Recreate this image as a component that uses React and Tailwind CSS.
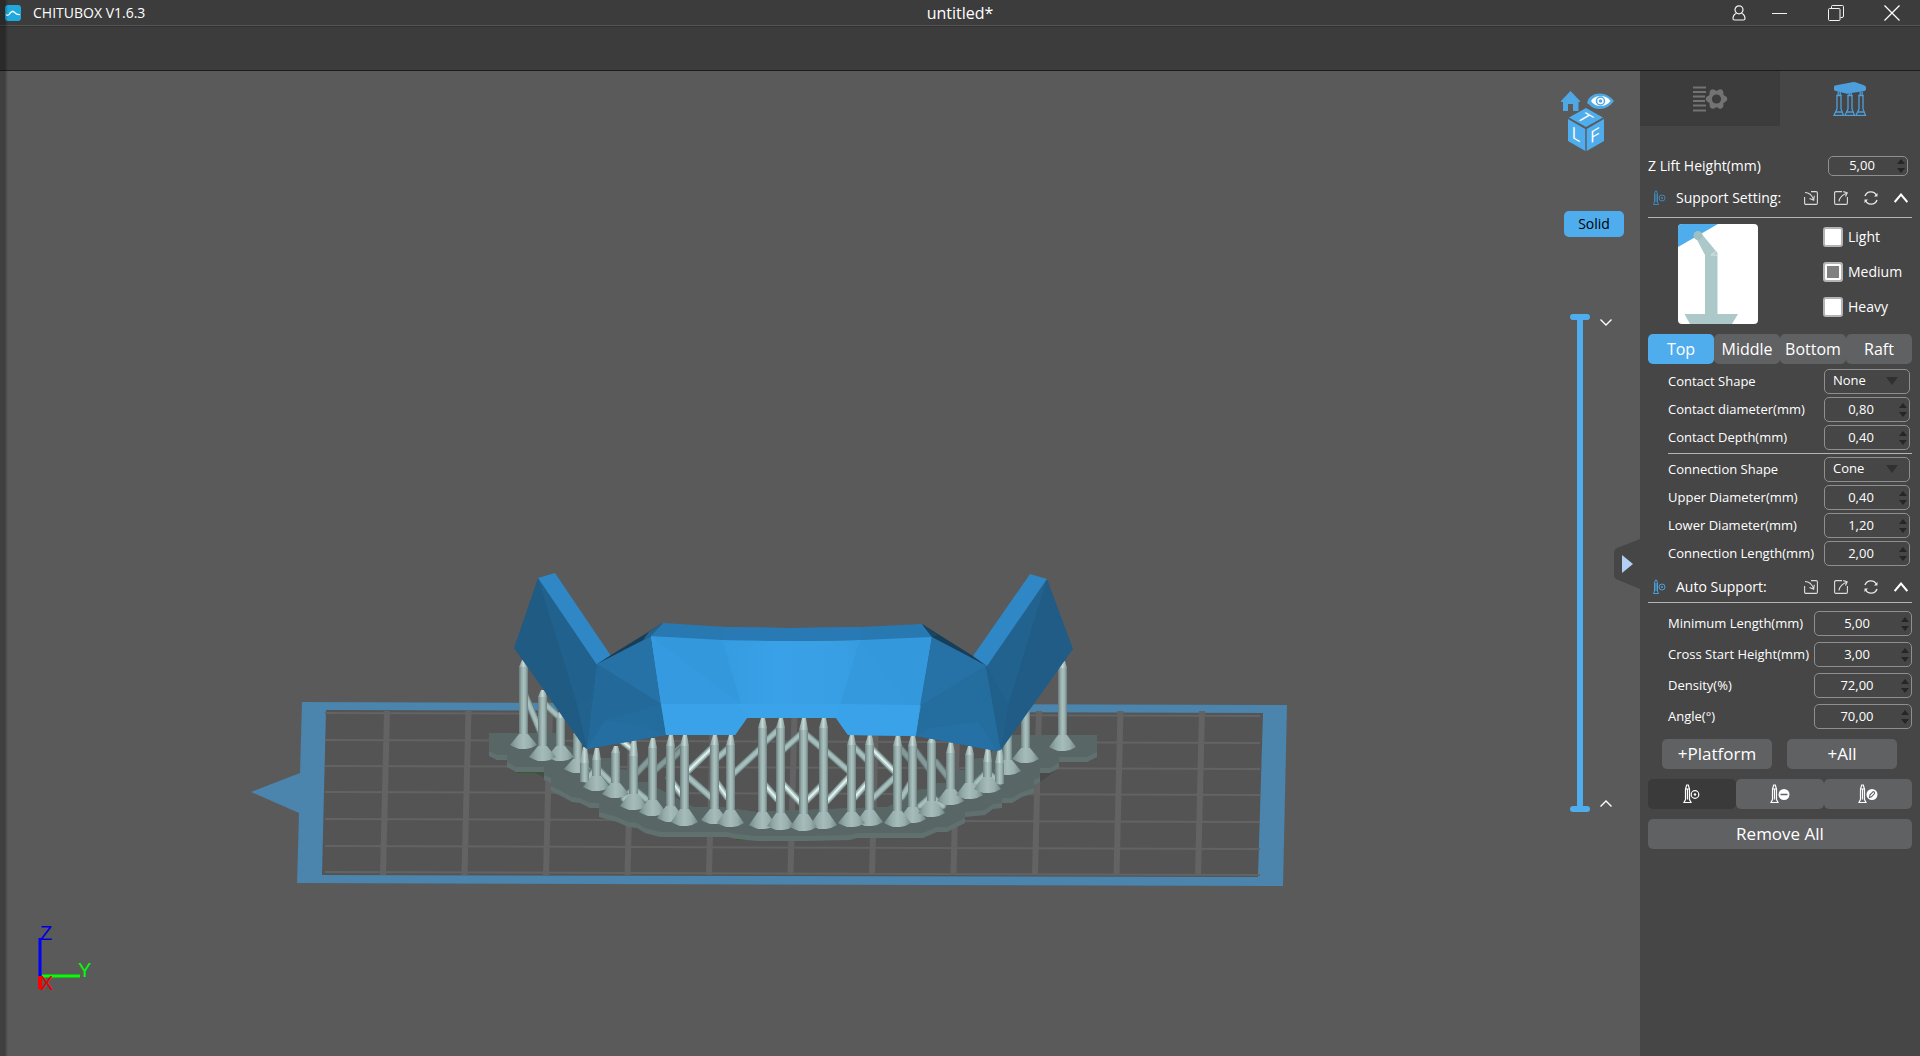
import React, { useState } from "react";

/* ---------- scene data ---------- */

const RAFT =
  "489,733 565,733 565,745 600,758 612,758 612,769 628,770 628,782 647,782 657,788 693,807 720,807 757,812 830,809 888,807 917,790 934,788 934,783 955,783 955,770 973,770 973,759 985,758 1010,735 1097,735 1097,757 1087,762 1059,762 1059,768 1050,773 1040,773 1040,782 1034,785 1034,793 1022,797 1012,803 1002,803 1002,808 993,809 985,815 965,817 965,823 947,832 937,832 923,838 857,838 850,840 807,841 757,841 737,839 727,837 660,837 645,833 637,828 628,827 617,822 599,817 599,808 590,808 580,803 572,802 563,797 551,791 551,783 544,780 544,772 516,772 507,767 507,760 497,760 489,756";

// x, tip, shoulder, cone top, cone bottom (equal values mean a pillar with no foot)
const PILLARS = [
  [577, 728, 735, 762, 773],
  [584, 747, 763, 781, 781],
  [560, 712, 718, 749, 761],
  [542, 690, 697, 749, 761],
  [523, 660, 667, 737, 749],
  [596, 748, 760, 779, 791],
  [615, 746, 753, 786, 798],
  [633, 738, 756, 797, 810],
  [652, 738, 748, 803, 816],
  [670, 735, 746, 809, 822],
  [714, 735, 745, 812, 824],
  [730, 735, 745, 813, 827],
  [762, 718, 728, 815, 829],
  [823, 718, 728, 815, 829],
  [780, 718, 728, 816, 830],
  [803, 718, 730, 817, 831],
  [869, 735, 745, 813, 826],
  [851, 735, 745, 815, 827],
  [912, 735, 746, 810, 823],
  [897, 735, 746, 814, 827],
  [931, 737, 743, 804, 817],
  [950, 742, 753, 792, 805],
  [969, 746, 755, 786, 799],
  [1007, 728, 735, 763, 775],
  [999, 748, 763, 783, 783],
  [987, 747, 762, 780, 793],
  [1025, 705, 710, 751, 763],
  [1062, 661, 668, 738, 751],
  [684, 735, 746, 812, 826],
];

// x1, y1, x2, y2, tone
const BRACES = [
  [523, 690, 541, 733, "mid"],
  [543, 702, 560, 718, "mid"],
  [622, 741, 632, 749, "light"],
  [633, 777, 650, 759, "dark"],
  [652, 773, 682, 746, "dark"],
  [670, 761, 682, 749, "dark"],
  [687, 772, 713, 747, "light"],
  [688, 777, 713, 799, "mid"],
  [669, 778, 682, 795, "light"],
  [715, 760, 730, 747, "mid"],
  [715, 780, 727, 797, "light"],
  [732, 775, 762, 747, "mid"],
  [763, 744, 780, 728, "mid"],
  [765, 785, 777, 799, "light"],
  [782, 751, 803, 732, "mid"],
  [782, 783, 802, 804, "light"],
  [803, 732, 823, 749, "mid"],
  [825, 750, 851, 773, "mid"],
  [804, 803, 823, 784, "light"],
  [827, 801, 851, 775, "light"],
  [852, 745, 869, 762, "mid"],
  [854, 798, 868, 782, "light"],
  [871, 748, 897, 774, "light"],
  [872, 799, 897, 775, "mid"],
  [900, 748, 913, 763, "dark"],
  [902, 797, 913, 779, "mid"],
  [915, 750, 932, 773, "dark"],
  [936, 762, 950, 780, "dark"],
  [586, 780, 596, 769, "mid"],
  [598, 769, 610, 781, "mid"],
  [624, 799, 633, 789, "mid"],
  [634, 789, 646, 799, "mid"],
  [920, 806, 931, 796, "mid"],
  [931, 796, 943, 806, "mid"],
  [976, 783, 986, 773, "mid"],
  [988, 773, 1000, 782, "mid"],
];

const TONES = {
  dark: ["#5e7170", "#7f9593", "#869c9a"],
  mid: ["#6b8180", "#9ab2b0", "#a9c1bf"],
  light: ["#748a88", "#a9c0be", "#dff0ee"],
};

function Brace({ b }) {
  const [x1, y1, x2, y2, tone] = b;
  const [edge, body, shine] = TONES[tone];
  const p = { x1, y1, x2, y2, strokeLinecap: "round" };
  return (
    <g>
      <line {...p} stroke={edge} strokeWidth="7" />
      <line {...p} stroke={body} strokeWidth="5" />
      <line {...p} stroke={shine} strokeWidth="2" />
    </g>
  );
}

function Pillar({ p }) {
  const [x, tip, sh, ct, cb] = p;
  return (
    <g>
      <rect x={x - 4} y={sh} width="9" height={ct - sh + 1} fill="url(#shaft)" />
      <polygon points={`${x - 1},${tip} ${x + 3},${tip} ${x + 5},${sh} ${x - 4},${sh}`} fill="url(#tip)" />
      {cb > ct && (
        <path
          d={`M${x - 4},${ct - 3} L${x + 5},${ct - 3} L${x + 14},${cb - 4} L${x + 8},${cb - 1} L${x + 3},${cb} L${x - 4},${cb} L${x - 9},${cb - 2} L${x - 13},${cb - 4} Z`}
          fill="url(#foot)"
        />
      )}
    </g>
  );
}

function Scene() {
  const cols = Array.from({ length: 11 }, (_, i) => i);
  const rows = [713, 740, 766, 792, 819, 846, 872];
  return (
    <svg
      className="absolute inset-0 h-full w-full"
      viewBox="0 71 1640 985"
      preserveAspectRatio="xMinYMin meet"
      aria-label="Build plate with supported model"
    >
      <defs>
        <linearGradient id="shaft">
          <stop offset="0" stopColor="#677b79" />
          <stop offset="0.25" stopColor="#91a8a6" />
          <stop offset="0.5" stopColor="#a9c0be" />
          <stop offset="0.75" stopColor="#9ab1af" />
          <stop offset="1" stopColor="#6b807e" />
        </linearGradient>
        <linearGradient id="tip">
          <stop offset="0" stopColor="#7d9390" />
          <stop offset="0.5" stopColor="#c4d8d6" />
          <stop offset="1" stopColor="#7d9390" />
        </linearGradient>
        <linearGradient id="foot">
          <stop offset="0" stopColor="#748987" />
          <stop offset="0.25" stopColor="#93aaa8" />
          <stop offset="0.5" stopColor="#a5bcba" />
          <stop offset="0.75" stopColor="#98afad" />
          <stop offset="1" stopColor="#748987" />
        </linearGradient>
        <linearGradient id="front">
          <stop offset="0" stopColor="#3498dc" />
          <stop offset="0.25" stopColor="#369ce2" />
          <stop offset="0.45" stopColor="#39a1e7" />
          <stop offset="0.6" stopColor="#39a0e6" />
          <stop offset="1" stopColor="#3498dc" />
        </linearGradient>
        <clipPath id="raftClip">
          <polygon points={RAFT} />
        </clipPath>
      </defs>

      {/* build plate */}
      <polygon points="302,702 1287,705 1283,886 297,883 299,813 251,792 300,773" fill="#4b84ad" />
      <polygon points="326,710 1263,713 1258,877 322,875" fill="#545454" />
      <g stroke="#636363">
        {cols.map((i) => (
          <line key={i} x1={387 + i * 81.5} y1="711" x2={383 + i * 81.5} y2="875" strokeWidth="6" />
        ))}
        {rows.map((y) => (
          <line key={y} x1="325" y1={y} x2="1260" y2={y + 3} strokeWidth="2" />
        ))}
      </g>

      {/* raft */}
      <path d="M517 772H545" stroke="#2b5f2d" strokeWidth="2" />
      <path d="M736 839H752" stroke="#2b5f2d" strokeWidth="2" />
      <path d="M535,773 L560,773 L560,785 Z M1040,782 L1054,772 L1040,772 Z" fill="#4a4a4a" />
      <polygon points={RAFT} fill="#5f706f" />
      <g clipPath="url(#raftClip)">
        <polygon points={RAFT} transform="translate(0 -5)" fill="#586766" />
      </g>

      {/* supports */}
      {BRACES.map((b, i) => (
        <Brace key={i} b={b} />
      ))}
      {PILLARS.map((p, i) => (
        <Pillar key={i} p={p} />
      ))}

      {/* model */}
      <g>
        <polygon points="538,578 514,648 584,747 587,749 597,664" fill="#205b84" />
        <polygon points="538,578 597,664 587,749 577,704" fill="#21618d" />
        <polygon points="597,664 590,700 577,704 587,749" fill="#22628f" />
        <polygon points="538,578 555,573 611,656 597,665" fill="#2f87c5" />
        <polygon points="597,664 651,636 666,735 587,749" fill="#236c9e" />
        <polygon points="597,664 651,636 661,704" fill="#2671a6" />
        <polygon points="587,749 605,720 661,704 597,664" fill="#236a9a" />
        <polygon points="587,749 605,720 645,727 666,735" fill="#246ea1" />
        <polygon points="597,664 611,655 663,623 651,636" fill="#173e59" />
        <polygon points="643,640 649,632 663,623 651,636" fill="#24648f" />

        <polygon
          points="651,636 722,639 790,641 860,640 932,636 916,736 848,735 836,718 747,718 735,735 666,735"
          fill="url(#front)"
        />
        <polygon points="651,636 722,639 741,704 661,704" fill="#3498dd" />
        <polygon points="651,636 661,704 741,704" fill="#359adf" />
        <polygon points="932,636 860,640 841,704 920,705" fill="#3498dc" />
        <polygon points="860,640 841,704 908,705" fill="#359add" />
        <polygon points="661,704 735,704 747,718 735,735 666,735" fill="#3aa2e9" />
        <polygon points="920,705 841,704 836,718 848,735 916,736" fill="#3aa2e8" />
        <polygon points="735,704 841,704 836,718 747,718" fill="#3ba3ea" />
        <polygon points="663,623 727,627 790,628 860,627 922,624 932,637 860,640 790,641 722,640 651,636" fill="#2879b2" />
        <polygon points="727,627 790,628 860,627 860,640 790,641 722,640" fill="#297ab4" />

        <polygon points="932,637 987,665 1001,750 997,751 916,736" fill="#246d9f" />
        <polygon points="932,637 987,665 920,706" fill="#2671a6" />
        <polygon points="916,736 930,728 978,721 997,751" fill="#2570a4" />
        <polygon points="922,624 932,637 987,666 973,656" fill="#173e59" />
        <polygon points="922,624 932,637 938,635" fill="#184763" />
        <polygon points="1047,579 1073,649 1001,750 986,666" fill="#205c86" />
        <polygon points="1047,579 986,666 1008,706" fill="#22628e" />
        <polygon points="986,666 1008,706 1001,750" fill="#21608b" />
        <polygon points="1030,574 1047,579 987,666 973,656" fill="#2f87c5" />
      </g>

      {/* axes */}
      <g strokeWidth="3">
        <path d="M40 976V938" stroke="#0000ff" />
        <path d="M42 976H80" stroke="#00ff00" />
        <path d="M40 976V989" stroke="#ff0000" strokeWidth="4" />
      </g>
      <g style={{ fontFamily: '"Liberation Sans", sans-serif', fontSize: 20 }}>
        <text x="40" y="940" fill="#0000dd">Z</text>
        <text x="78" y="977" fill="#00ff00">Y</text>
        <text x="40" y="990" fill="#e80000">X</text>
      </g>
    </svg>
  );
}

/* ---------- icons ---------- */

const AppLogo = () => (
  <svg width="16" height="16" viewBox="0 0 16 16" aria-hidden="true">
    <rect width="16" height="16" rx="3" fill="#1eaadc" />
    <path d="M1 9.500Q3 11.500 5 8.500T9.500 7 M4.500 8.500Q7 5 9.500 7.500T15 9.500" fill="none" stroke="#fff" strokeWidth="1.200" />
  </svg>
);

const UserIcon = () => (
  <svg width="14" height="16" viewBox="0 0 14 16" fill="none" stroke="#f2f2f2" strokeWidth="1.200" aria-hidden="true">
    <circle cx="7" cy="4.800" r="4" />
    <path d="M4.500 8.300C2 9.500 1 11.500 1 13.500c0 1 .5 1.500 1.500 1.500h9c1 0 1.500-.5 1.500-1.500 0-2-1-4-3.500-5.200" />
  </svg>
);

const MinIcon = () => (
  <svg width="16" height="16" viewBox="0 0 16 16" stroke="#f2f2f2" aria-hidden="true">
    <path d="M0 8.500H15" />
  </svg>
);

const RestoreIcon = () => (
  <svg width="16" height="16" viewBox="0 0 16 16" fill="none" stroke="#f2f2f2" aria-hidden="true">
    <rect x="0.500" y="3.500" width="11.500" height="12" rx="1" />
    <path d="M3.500 3.500V1.500Q3.500 .5 4.500 .5H14.500Q15.500 .5 15.500 1.500V11Q15.500 12.500 14 12.500H12.500" />
  </svg>
);

const CloseIcon = () => (
  <svg width="16" height="16" viewBox="0 0 16 16" stroke="#ffffff" strokeWidth="1.300" aria-hidden="true">
    <path d="M.5 .5 15.500 15.500M15.500 .5 .5 15.500" />
  </svg>
);

const GearListIcon = () => (
  <svg width="36" height="26" viewBox="0 0 36 26" aria-hidden="true">
    <path d="M1 1.500H14M1 6H14M1 10.500H13M1 15H13M1 19.500H14M1 24.500H14" stroke="#737373" strokeWidth="1.800" />
    <g fill="#737373" transform="translate(24.500 13)">
      <circle r="8" />
      {[0, 60, 120, 180, 240, 300].map((a) => (
        <path key={a} d="M6 -4.500 9 -2.800Q10.800 -1.500 10.800 0 10.800 1.500 9 2.800L6 4.500Z" transform={`rotate(${a})`} />
      ))}
    </g>
    <circle cx="24.500" cy="13" r="4.600" fill="#3c3c3c" />
  </svg>
);

const SupportTabIcon = () => (
  <svg width="34" height="36" viewBox="0 0 34 36" aria-hidden="true">
    <path d="M1 6Q1 5 2 4.600L19 1.200Q21 .8 22.500 1.300L31 4.200Q33 5 33 6.500V8Q33 9.500 31.500 10L15 12.600Q14 12.700 13 12.400L2 9.800Q1 9.500 1 8.500Z" fill="#4d9fdb" />
    <g fill="none" stroke="#4d9fdb" strokeWidth="1.300">
      {[1, 12, 23].map((x) => (
        <g key={x}>
          <path d={`M${x + 3} 14V28L${x} 34.300H${x + 9.500}L${x + 7} 28V14`} />
          <path d={`M${x + 2.500} 14.500H${x + 7.500}M${x + 4.200} 14V10.500M${x + 6.200} 14V10.500M${x + 2} 31H${x + 8}`} />
        </g>
      ))}
    </g>
  </svg>
);

const PinIcon = ({ color }) => (
  <svg width="13" height="16" viewBox="0 0 13 16" fill="none" stroke={color} aria-hidden="true">
    <path d="M1.500 4V12L.5 14.500H5.500L4.500 12V4L3.500 1H2.500ZM3 4V12" />
    <circle cx="9" cy="8" r="3" />
    <circle cx="9" cy="8" r="1" fill={color} stroke="none" />
  </svg>
);

function ToolPin({ kind }) {
  return (
    <svg width="20" height="20" viewBox="0 0 20 20" fill="none" stroke="#fff" aria-hidden="true">
      {kind === "target" ? (
        <>
          <path d="M3.500 5V15.500L2 18.500H9L7.500 15.500V5L6.300 1H4.700ZM3.500 5H7.500" strokeWidth="1.200" />
          <path d="M5.500 5V15.500" strokeWidth="1.200" />
          <circle cx="13" cy="10.500" r="3.800" strokeWidth="1.200" />
          <circle cx="13" cy="10.500" r="1.200" fill="#fff" stroke="none" />
        </>
      ) : (
        <>
          <path d="M2.500 5V15.500L1 18.500H8L6.500 15.500V5L5.300 1H3.700ZM2.500 5H6.500" strokeWidth="1.200" />
          <path d="M4.500 5V15.500" strokeWidth="1.200" />
          <circle cx="14" cy="10.500" r="5.500" fill="#fff" stroke="none" />
        </>
      )}
      {kind === "minus" && <path d="M10.500 10.500H17.500" stroke="#606163" strokeWidth="1.500" />}
      {kind === "edit" && (
        <path d="M11.500 13.500 12 10.800 15.200 7.500Q17 8 16.500 9.500L13.500 12.800Z" stroke="#606163" strokeWidth="1.100" />
      )}
    </svg>
  );
}

const ImportIcon = () => (
  <svg width="14" height="14" viewBox="0 0 14 14" fill="none" stroke="#dcdcdc" strokeWidth="1.100" aria-hidden="true">
    <path d="M7 .6H12Q13.400 .6 13.400 2V12Q13.400 13.400 12 13.400H2Q.6 13.400 .6 12V6" />
    <path d="M1 1.500Q7 1.500 9.500 8.500M5.500 7.500 9.700 9.200 10.300 4.800" />
  </svg>
);

const ExportIcon = () => (
  <svg width="14" height="14" viewBox="0 0 14 14" fill="none" stroke="#dcdcdc" strokeWidth="1.100" aria-hidden="true">
    <path d="M8 .6H2Q.6 .6 .6 2V12Q.6 13.400 2 13.400H12Q13.400 13.400 13.400 12V6" />
    <path d="M5 10.500Q5.500 5 13 2M9.300 .6 13.200 1.800 11.500 5.500" />
  </svg>
);

const ResetIcon = () => (
  <svg width="14" height="14" viewBox="0 0 14 14" fill="none" stroke="#e8e8e8" strokeWidth="1.400" aria-hidden="true">
    <path d="M1 5A6.200 6.200 0 0 1 12.500 4.500M13 9A6.200 6.200 0 0 1 1.500 9.500" />
    <path d="M13.500 2V5.500H10ZM.5 12V8.500H4Z" fill="#e8e8e8" stroke="none" />
  </svg>
);

const CollapseIcon = () => (
  <svg width="14" height="10" viewBox="0 0 14 10" fill="none" stroke="#fff" strokeWidth="2" aria-hidden="true">
    <path d="M.7 9 7 1.500 13.300 9" />
  </svg>
);

const ContactPicture = () => (
  <svg className="rounded-[4px]" width="80" height="100" viewBox="0 0 80 100" role="img" aria-label="Support shape">
    <rect width="80" height="100" fill="#fff" />
    <polygon points="0,0 40,0 0,23" fill="#4fadee" />
    <polygon points="17,12 23,9 39.500,29 39.500,90 27,90 27,31" fill="#adc8c9" />
    <polygon points="6.500,90 60,90 54,100 12,100" fill="#adc8c9" />
    <circle cx="20" cy="11.500" r="4.500" fill="#9fbfc1" />
    <path d="M33 31 39 27M33 31H39" stroke="#d6e4e4" strokeWidth="1" />
  </svg>
);

/* ---------- controls ---------- */

function NumberBox({ id, value, box }) {
  const [v, setV] = useState(value);
  const step = (d) => {
    const n = parseFloat(v.replace(",", ".")) + d;
    setV(n.toFixed(2).replace(".", ","));
  };
  return (
    <div className={`flex items-center rounded-[5px] border border-[#8f8f8f] ${box}`}>
      <input
        id={id}
        value={v}
        onChange={(e) => setV(e.target.value)}
        className="w-0 min-w-0 flex-1 bg-transparent text-center text-[13px] text-white outline-none"
      />
      <span className="flex w-3 flex-col items-center gap-1">
        <button aria-label="Increase" onClick={() => step(1)}>
          <svg className="block" width="8" height="5" viewBox="0 0 8 5"><path d="M4 0 8 5H0Z" fill="#262626" /></svg>
        </button>
        <button aria-label="Decrease" onClick={() => step(-1)}>
          <svg className="block" width="8" height="5" viewBox="0 0 8 5"><path d="M4 5 8 0H0Z" fill="#262626" /></svg>
        </button>
      </span>
    </div>
  );
}

function SelectBox({ id, options }) {
  return (
    <div className="relative h-[25px] w-[86px]">
      <select
        id={id}
        className="block h-full w-full appearance-none rounded-[5px] border border-[#8f8f8f] bg-transparent pb-px pl-2 text-[13px] text-white outline-none"
      >
        {options.map((o) => (
          <option key={o} className="bg-[#464646]">{o}</option>
        ))}
      </select>
      <svg className="pointer-events-none absolute right-3 top-2" width="12" height="8" viewBox="0 0 12 8">
        <path d="M0 0H12L6 8Z" fill="#303030" />
      </svg>
    </div>
  );
}

function Field({ id, label, children }) {
  return (
    <div className="flex h-[25px] items-center justify-between">
      <label htmlFor={id} className="text-[13px]">{label}</label>
      {children}
    </div>
  );
}

function SectionHead({ title, icon }) {
  return (
    <div className="flex h-5 items-center pl-[5px] pr-1">
      {icon}
      <h2 className="ml-2.5 flex-1 text-sm">{title}</h2>
      <div className="flex items-center gap-4">
        <button aria-label="Import"><ImportIcon /></button>
        <button aria-label="Export"><ExportIcon /></button>
        <button aria-label="Reset"><ResetIcon /></button>
        <button aria-label="Collapse"><CollapseIcon /></button>
      </div>
    </div>
  );
}

function SidePanel() {
  const [level, setLevel] = useState("Medium");
  const [part, setPart] = useState("Top");
  return (
    <aside className="flex w-[280px] shrink-0 flex-col bg-[#464646] text-white">
      <div className="grid h-[55px] grid-cols-2" role="tablist">
        <button role="tab" aria-label="Slice settings" className="flex items-center justify-center bg-[#3c3c3c]">
          <GearListIcon />
        </button>
        <button role="tab" aria-label="Support settings" aria-selected="true" className="flex items-center justify-center">
          <SupportTabIcon />
        </button>
      </div>

      <div className="flex flex-col px-2 pt-[30px]">
        <div className="flex items-center justify-between pr-1">
          <label htmlFor="lift" className="text-sm leading-5">Z Lift Height(mm)</label>
          <NumberBox id="lift" value="5,00" box="h-5 w-20" />
        </div>

        <div className="mt-3 border-b border-[#b4b4b4] pb-[9px]">
          <SectionHead title="Support Setting:" icon={<PinIcon color="#4286b8" />} />
        </div>

        <div className="mt-1.5 flex justify-between pl-[30px]">
          <ContactPicture />
          <div className="flex w-[89px] flex-col gap-[15px] pt-[3px]" role="radiogroup" aria-label="Support strength">
            {["Light", "Medium", "Heavy"].map((l) => (
              <label key={l} className="flex items-center gap-[5px] text-sm leading-5">
                <input
                  type="radio"
                  name="level"
                  checked={level === l}
                  onChange={() => setLevel(l)}
                  className="size-5 appearance-none rounded-[3px] border-2 border-[#b4b4b4] bg-white checked:bg-[#808080] checked:shadow-[inset_0_0_0_2px_#fff]"
                />
                {l}
              </label>
            ))}
          </div>
        </div>

        <div className="mt-2.5 grid grid-cols-4" role="tablist">
          {["Top", "Middle", "Bottom", "Raft"].map((t) => (
            <button
              key={t}
              role="tab"
              aria-selected={part === t}
              onClick={() => setPart(t)}
              className="h-[30px] rounded-[5px] bg-[#606163] text-base aria-selected:bg-[#4fadee]"
            >
              {t}
            </button>
          ))}
        </div>

        <div className="ml-5 mt-[5px] flex flex-col gap-[3px] border-b border-[#b4b4b4] pb-[3px] pr-0.5">
          <Field id="cshape" label="Contact Shape">
            <SelectBox id="cshape" options={["None", "Sphere"]} />
          </Field>
          <Field id="cdia" label="Contact diameter(mm)">
            <NumberBox id="cdia" value="0,80" box="h-[25px] w-[86px]" />
          </Field>
          <Field id="cdepth" label="Contact Depth(mm)">
            <NumberBox id="cdepth" value="0,40" box="h-[25px] w-[86px]" />
          </Field>
        </div>

        <div className="ml-5 mt-[3px] flex flex-col gap-[3px] pr-0.5">
          <Field id="nshape" label="Connection Shape">
            <SelectBox id="nshape" options={["Cone", "Cylinder"]} />
          </Field>
          <Field id="udia" label="Upper Diameter(mm)">
            <NumberBox id="udia" value="0,40" box="h-[25px] w-[86px]" />
          </Field>
          <Field id="ldia" label="Lower Diameter(mm)">
            <NumberBox id="ldia" value="1,20" box="h-[25px] w-[86px]" />
          </Field>
          <Field id="nlen" label="Connection Length(mm)">
            <NumberBox id="nlen" value="2,00" box="h-[25px] w-[86px]" />
          </Field>
        </div>

        <div className="mt-[11px] border-b border-[#b4b4b4] pb-[5px]">
          <SectionHead title="Auto Support:" icon={<PinIcon color="#4d9fdb" />} />
        </div>

        <div className="ml-5 mt-2 flex flex-col gap-1.5">
          <Field id="minlen" label="Minimum Length(mm)">
            <NumberBox id="minlen" value="5,00" box="h-[25px] w-[98px]" />
          </Field>
          <Field id="cross" label="Cross Start Height(mm)">
            <NumberBox id="cross" value="3,00" box="h-[25px] w-[98px]" />
          </Field>
          <Field id="density" label="Density(%)">
            <NumberBox id="density" value="72,00" box="h-[25px] w-[98px]" />
          </Field>
          <Field id="angle" label="Angle(°)">
            <NumberBox id="angle" value="70,00" box="h-[25px] w-[98px]" />
          </Field>
        </div>

        <div className="mt-2.5 grid grid-cols-2 gap-[15px] pl-3.5 pr-[15px]">
          <button className="h-[30px] rounded-[5px] bg-[#606163] text-[17px]">+Platform</button>
          <button className="h-[30px] rounded-[5px] bg-[#606163] text-[17px]">+All</button>
        </div>

        <div className="mt-2.5 grid grid-cols-3">
          <button aria-label="Add support" className="flex h-[30px] items-center justify-center rounded-[5px] bg-[#3a3a3a]">
            <ToolPin kind="target" />
          </button>
          <button aria-label="Delete support" className="flex h-[30px] items-center justify-center rounded-[5px] bg-[#606163]">
            <ToolPin kind="minus" />
          </button>
          <button aria-label="Edit support" className="flex h-[30px] items-center justify-center rounded-[5px] bg-[#606163]">
            <ToolPin kind="edit" />
          </button>
        </div>

        <button className="mt-2.5 h-[30px] rounded-[5px] bg-[#606163] text-[17px]">Remove All</button>
      </div>
    </aside>
  );
}

function ViewCube() {
  return (
    <svg className="ml-px" width="54" height="62" viewBox="1561 90 54 62" role="img" aria-label="View cube">
      <path d="M1561 101 1570.500 91 1580 101V102H1578.500V111H1573V104H1568V111H1563V102H1561Z" fill="#4fa8e4" />
      <path d="M1587 103Q1589 93.500 1600 93.500 1608 93.500 1614 101 1608 109 1600 109 1593 109 1589 104.500Z" fill="#4fa8e4" />
      <path d="M1591 101Q1594 96 1600.500 96 1607 96 1610.500 101 1607 106 1600.500 106 1594 106 1591 101Z" fill="#fff" />
      <circle cx="1600.500" cy="101" r="4" fill="none" stroke="#4fa8e4" strokeWidth="1.500" />
      <circle cx="1600.500" cy="101" r="1.800" fill="#4fa8e4" />
      <g fill="#4fadee">
        <polygon points="1586,108 1603,117.500 1586,127 1569,117.500" />
        <polygon points="1568,119 1585.300,129 1585.300,151 1568,141" />
        <polygon points="1604,119 1586.700,129 1586.700,151 1604,141" />
      </g>
      <g fill="#fff" textAnchor="middle" style={{ fontFamily: '"Liberation Sans", sans-serif', fontSize: 17 }}>
        <text transform="matrix(.87 .5 -.87 .5 1585 117.500)" y="6">T</text>
        <text transform="matrix(.87 .5 0 1 1576 140)">L</text>
        <text transform="matrix(.87 -.5 0 1 1595 141)">F</text>
      </g>
    </svg>
  );
}

const LAYER_INPUT =
  "col-start-1 row-start-1 m-0 h-full w-5 appearance-none bg-transparent [direction:rtl] [writing-mode:vertical-lr] pointer-events-none [&::-webkit-slider-thumb]:pointer-events-auto [&::-webkit-slider-thumb]:h-1.5 [&::-webkit-slider-thumb]:w-5 [&::-webkit-slider-thumb]:appearance-none [&::-webkit-slider-thumb]:rounded-full [&::-webkit-slider-thumb]:bg-[#4fadee]";

function Viewport() {
  const [top, setTop] = useState(100);
  const [bottom, setBottom] = useState(0);
  return (
    <main className="relative flex flex-1 justify-end overflow-hidden bg-[#5a5a5a]">
      <Scene />
      <div className="relative flex w-20 flex-col pt-[19px]">
        <ViewCube />
        <button className="ml-1 mt-[59px] h-[26px] w-[60px] rounded-[5px] bg-[#4fadee] text-sm text-black">Solid</button>
        <div className="ml-2.5 mt-[77px] flex h-[498px] gap-2.5">
          <div className="grid w-5 justify-items-center">
            <span className="col-start-1 row-start-1 h-full w-1.5 bg-[#4fadee]" />
            <input type="range" aria-label="Top layer" value={top} onChange={(e) => setTop(+e.target.value)} className={LAYER_INPUT} />
            <input type="range" aria-label="Bottom layer" value={bottom} onChange={(e) => setBottom(+e.target.value)} className={LAYER_INPUT} />
          </div>
          <div className="flex flex-col justify-between py-[5px]">
            <button aria-label="Layer down">
              <svg className="block" width="12" height="7" viewBox="0 0 12 7" fill="none" stroke="#fff" strokeWidth="1.400"><path d="M.5 .5 6 6 11.500 .5" /></svg>
            </button>
            <button aria-label="Layer up">
              <svg className="block" width="12" height="7" viewBox="0 0 12 7" fill="none" stroke="#fff" strokeWidth="1.400"><path d="M.5 6.500 6 1 11.500 6.500" /></svg>
            </button>
          </div>
        </div>
      </div>
      <button aria-label="Hide panel" className="absolute right-0 top-[468px]">
        <svg className="block" width="26" height="50" viewBox="0 0 26 50">
          <path d="M26 0 3 9Q0 10.500 0 13V36Q0 39 3 40.500L26 50Z" fill="#464646" />
          <path d="M8 16 19 25 8 34Z" fill="#b4cff4" />
        </svg>
      </button>
    </main>
  );
}

export default function App() {
  return (
    <div className="relative flex h-screen flex-col overflow-hidden bg-[#3c3c3c] font-['Open_Sans','Noto_Sans',sans-serif] text-white">
      <header className="grid h-[26px] grid-cols-3 items-center border-b border-[#555555]">
        <div className="flex items-center gap-3 pl-[5px]">
          <AppLogo />
          <span className="text-sm leading-5">CHITUBOX V1.6.3</span>
        </div>
        <h1 className="text-center text-base leading-5">untitled*</h1>
        <div className="flex items-center justify-end pr-5">
          <button aria-label="Account" className="mr-[26px]"><UserIcon /></button>
          <button aria-label="Minimize" className="mr-10"><MinIcon /></button>
          <button aria-label="Restore" className="mr-10"><RestoreIcon /></button>
          <button aria-label="Close"><CloseIcon /></button>
        </div>
      </header>
      <div className="h-[45px] shrink-0 border-b border-t border-b-[#1c1c1c] border-t-[#303030]" />
      <div className="flex min-h-0 flex-1">
        <Viewport />
        <SidePanel />
      </div>
      <div className="pointer-events-none absolute inset-y-0 left-0 w-2 bg-linear-to-r from-black/30 from-60% to-transparent" />
    </div>
  );
}
